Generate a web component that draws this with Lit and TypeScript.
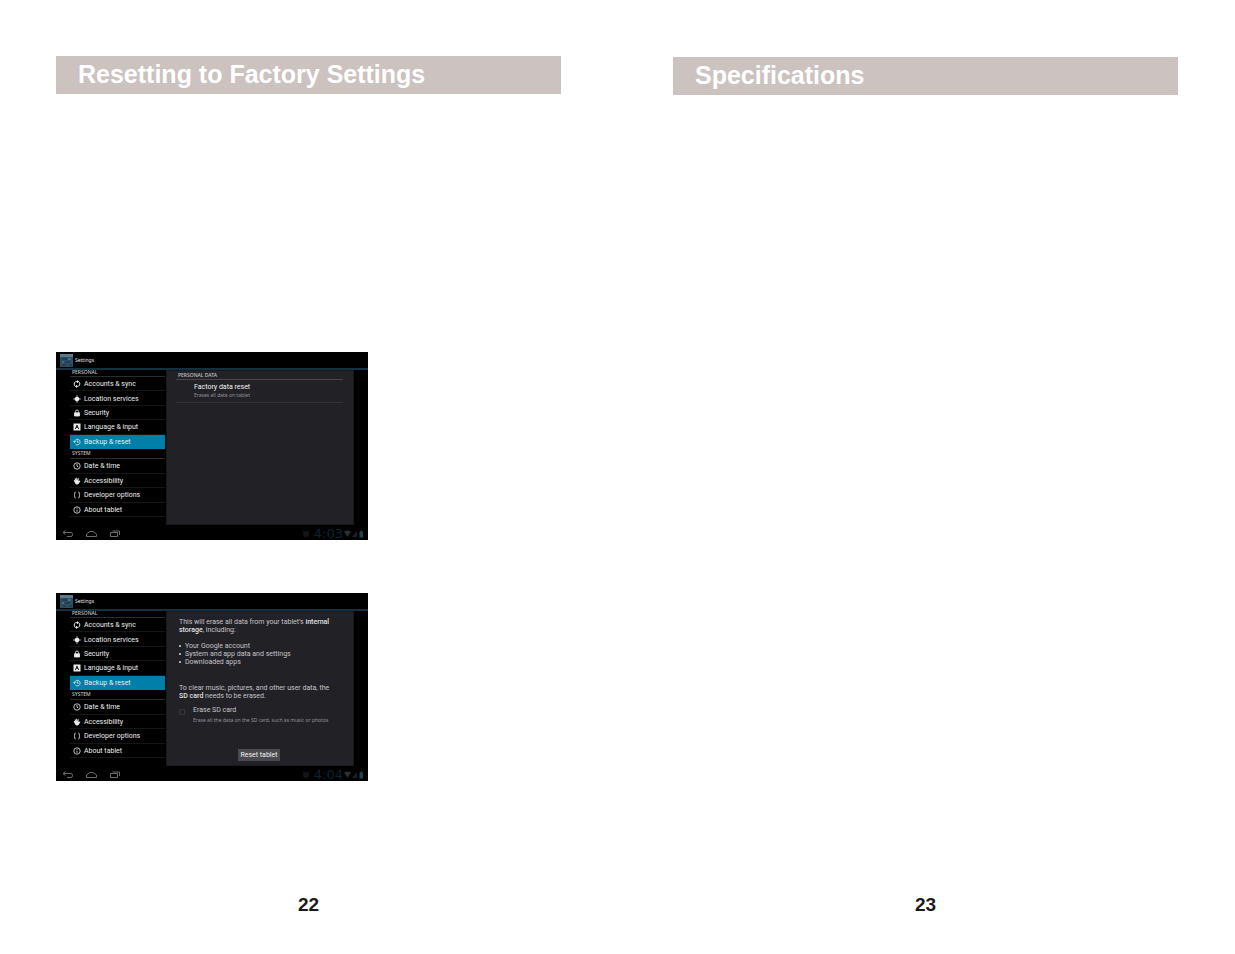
import { LitElement, html, css, svg, nothing } from "lit";
import { customElement, property } from "lit/decorators.js";

const icons: Record<string, unknown> = {
  sync: svg`<path stroke-width="2" d="M4.600 13A6 6 0 0 1 5 3.400H9.500M11.400 3A6 6 0 0 1 11 12.600H6.500" /><path fill="currentColor" stroke="none" d="M8 0L12 3.400L8 6.600ZM8 9.400L4 12.600L8 16Z" />`,
  location: svg`<circle cx="8" cy="8" r="4.600" fill="currentColor" stroke="none" /><path d="M8 .5V15.500M.5 8H15.500" />`,
  lock: svg`<path d="M3 7.500H13V14H3Z" fill="currentColor" /><path d="M5 7V5A3 3 0 0 1 11 5V7" />`,
  language: svg`<path fill="currentColor" stroke="none" fill-rule="evenodd" d="M1 1H15V15H1ZM7 4L4 12H5.800L6.400 10.200H9.600L10.200 12H12L9 4ZM8 6L9.100 8.800H6.900Z" />`,
  backup: svg`<path d="M3 8A5.600 5.600 0 1 1 5 12.400" /><path d="M.6 6.600L3 9.200L5.600 6.600M8.600 4.800V8.400H11.400" />`,
  clock: svg`<circle cx="8" cy="8" r="6.400" /><path d="M8 4V8.400L10.600 10" />`,
  hand: svg`<path fill="currentColor" stroke="none" d="M1.400 6.200L3 5.400L4.600 8L3.400 3L5 2.400L6.600 6.600L6.400 1.400H8L8.800 6.400L9.800 2L11.400 2.400L11 8L13.400 6.800L14.800 7.800L11.400 13.400Q9.600 15.400 7 14.800Q4.600 14.200 3.600 11.400Z" />`,
  braces: svg`<path d="M5.400 2Q3.400 2 3.400 4V6.400L2 8L3.400 9.600V12Q3.400 14 5.400 14M10.600 2Q12.600 2 12.600 4V6.400L14 8L12.600 9.600V12Q12.600 14 10.600 14" />`,
  info: svg`<circle cx="8" cy="8" r="6.400" /><path d="M8 7.200V11.600M8 4.400V6" />`,
};

const icon = (name: string) => html`<svg
  class="icon"
  viewBox="0 0 16 16"
  fill="none"
  stroke="currentColor"
  stroke-width="1.6"
  aria-hidden="true"
>
  ${icons[name]}
</svg>`;

const personal = [
  ["sync", "Accounts & sync"],
  ["location", "Location services"],
  ["lock", "Security"],
  ["language", "Language & input"],
  ["backup", "Backup & reset"],
];

const system = [
  ["clock", "Date & time"],
  ["hand", "Accessibility"],
  ["braces", "Developer options"],
  ["info", "About tablet"],
];

@customElement("tablet-screen")
export class TabletScreen extends LitElement {
  @property() view: "list" | "confirm" = "list";
  @property() time = "";

  static styles = css`
    :host {
      display: flex;
      flex-direction: column;
      width: 312px;
      height: 188px;
      background: #000;
      color: #e4e4e4;
      font-family: Roboto, "Liberation Sans", sans-serif;
      font-size: 7px;
      line-height: 8px;
      overflow: hidden;
    }
    * {
      box-sizing: border-box;
    }
    h3,
    h4,
    p,
    ul {
      margin: 0;
      padding: 0;
      font-weight: 400;
    }
    h3,
    h4,
    small {
      font-family: "Noto Sans", Roboto, sans-serif;
      font-size: 5px;
    }
    header {
      display: flex;
      align-items: center;
      gap: 2px;
      height: 18px;
      padding-left: 4px;
      border-bottom: 2px solid #15303f;
    }
    header svg {
      width: 13px;
      height: 13px;
    }
    .body {
      flex: 1;
      display: grid;
      grid-template-columns: 95px 1fr;
      column-gap: 1px;
      padding: 0 14px;
      min-height: 0;
    }
    nav {
      display: flex;
      flex-direction: column;
    }
    h4 {
      font-weight: 500;
      color: #c4c4c4;
    }
    nav h4 {
      height: 7px;
      line-height: 4px;
      padding-left: 2px;
      border-bottom: 1px solid #2c2c2c;
    }
    nav .second {
      height: 10px;
      line-height: 9px;
    }
    nav ul {
      display: flex;
      flex-direction: column;
      height: 72px;
      list-style: none;
    }
    nav .second + ul {
      height: 58px;
    }
    li {
      flex: 1;
      display: flex;
    }
    nav a {
      flex: 1;
      display: flex;
      align-items: center;
      gap: 3px;
      padding: 1px 0 0 3px;
      border-bottom: 1px solid #161616;
      color: #ececec;
      text-decoration: none;
      white-space: nowrap;
    }
    nav a.current {
      background: #007fa8;
      border-color: #007fa8;
    }
    .icon {
      width: 8px;
      height: 8px;
    }
    .pane {
      display: flex;
      flex-direction: column;
      padding: 0 10px 0 9px;
      background: #222126;
      border: 1px solid #19181c;
    }
    .pane h4 {
      padding: 0 2px;
      border-bottom: 1px solid #48474c;
    }
    .entry {
      padding: 3px 0 3px 18px;
      border: 0;
      border-bottom: 1px solid #323136;
      background: none;
      color: #f0f0f0;
      font: inherit;
      line-height: 8px;
      text-align: left;
    }
    small {
      display: block;
      color: #929296;
    }
    .confirm {
      padding: 6px 20px 0 12px;
      color: #c4c4c6;
      white-space: nowrap;
    }
    b {
      font-weight: 500;
      color: #e0e0e0;
    }
    .confirm ul {
      margin: 8px 0 18px;
      padding-left: 6px;
    }
    .confirm li {
      display: block;
      position: relative;
    }
    .confirm li::before {
      content: "";
      position: absolute;
      left: -6px;
      top: 3px;
      width: 2px;
      height: 2px;
      border-radius: 1px;
      background: #d8d8d8;
    }
    .option {
      display: grid;
      grid-template-columns: 6px 1fr;
      column-gap: 8px;
      align-items: start;
      margin-top: 6px;
    }
    .option input {
      appearance: none;
      width: 6px;
      height: 6px;
      margin: 3px 0 0;
      border: 1px solid #34343a;
    }
    .option small {
      margin-top: 2px;
    }
    .reset {
      align-self: center;
      width: 42px;
      height: 12px;
      margin: 25px 0 0 6px;
      padding: 0;
      border: 0;
      background: #4a4a4e;
      color: #f0f0f0;
      font: inherit;
      line-height: 12px;
    }
    footer {
      display: flex;
      align-items: center;
      height: 15px;
      padding: 3px 4px 0 6px;
    }
    .keys {
      width: 60px;
      height: 8px;
    }
    .status {
      display: flex;
      align-items: center;
      margin-left: auto;
      color: #0c2531;
      font-family: "DejaVu Sans", sans-serif;
      font-size: 13px;
      line-height: 12px;
    }
    .alarm {
      width: 8px;
      height: 8px;
      margin-right: 4px;
    }
    .signal {
      width: 21px;
      height: 8px;
    }
  `;

  private group(items: string[][]) {
    return html`<ul>
      ${items.map(
        ([name, label]) => html`<li>
          <a
            href="#"
            class=${name === "backup" ? "current" : ""}
            aria-current=${name === "backup" ? "page" : nothing}
            >${icon(name)}<span>${label}</span></a
          >
        </li>`
      )}
    </ul>`;
  }

  private listPane() {
    return html`<section class="pane">
      <h4>PERSONAL DATA</h4>
      <button class="entry">Factory data reset<small>Erases all data on tablet</small></button>
    </section>`;
  }

  private confirmPane() {
    return html`<section class="pane confirm">
      <p>This will erase all data from your tablet's <b>internal<br />storage</b>, including:</p>
      <ul>
        <li>Your Google account</li>
        <li>System and app data and settings</li>
        <li>Downloaded apps</li>
      </ul>
      <p>To clear music, pictures, and other user data, the<br /><b>SD card</b> needs to be erased.</p>
      <div class="option">
        <input type="checkbox" id="erase" />
        <label for="erase"
          >Erase SD card<small>Erase all the data on the SD card, such as music or photos</small></label
        >
      </div>
      <button class="reset">Reset tablet</button>
    </section>`;
  }

  render() {
    return html`
      <header>
        <svg viewBox="0 0 13 13" aria-hidden="true">
          <rect width="13" height="13" fill="#2f4d62" />
          <path d="M0 0H13V3H0Z" fill="#5b7a8e" />
          <path d="M2 5H7M5 8H10M3 11H6M9 11H12" stroke="#18303f" />
          <path d="M8 5H11M2 8H4" stroke="#6b8a9c" />
        </svg>
        <h3>Settings</h3>
      </header>
      <div class="body">
        <nav aria-label="Settings">
          <h4>PERSONAL</h4>
          ${this.group(personal)}
          <h4 class="second">SYSTEM</h4>
          ${this.group(system)}
        </nav>
        ${this.view === "list" ? this.listPane() : this.confirmPane()}
      </div>
      <footer>
        <svg class="keys" viewBox="0 0 60 8" fill="none" stroke="#6c6c6c" aria-hidden="true">
          <path d="M3.500 .5L1 2.500L3.500 4.500M1 2.500H9Q10.500 2.500 10.500 4.500T9 6.500H5" />
          <path d="M24.500 6.500V4L28 1.500H31L34.500 4V6.500Z" />
          <path d="M48.500 2.500H55.500V6.500H48.500ZM50.500 1H57.500V5" />
        </svg>
        <div class="status">
          <svg class="alarm" viewBox="0 0 8 8" fill="#111517" aria-hidden="true">
            <circle cx="4" cy="4" r="3" />
            <path d="M0 1L2 0V2ZM8 1L6 0V2Z" />
          </svg>
          <span>${this.time}</span>
          <svg class="signal" viewBox="0 0 21 8" aria-hidden="true">
            <path d="M1 1.500Q4.500 -.5 8 1.500L4.500 7Z" fill="#293034" />
            <path d="M9 7L14 1V7Z" fill="#1b2225" />
            <path d="M16.500 1.500H17.500V.5H19V1.500H20V7.500H16.500Z" fill="#1f4252" />
          </svg>
        </div>
      </footer>
    `;
  }
}

@customElement("app-root")
export class AppRoot extends LitElement {
  static styles = css`
    :host {
      box-sizing: border-box;
      display: grid;
      grid-template-columns: 1fr 1fr;
      column-gap: 112px;
      min-height: 100vh;
      padding: 56px 57px 37px 56px;
      background: #fff;
      font-family: "Liberation Sans", Arial, sans-serif;
    }
    .page {
      display: flex;
      flex-direction: column;
    }
    .right {
      padding-top: 1px;
    }
    h2 {
      margin: 0;
      padding: 0 22px 2px;
      background: #ccc2c0;
      color: #fff;
      font-size: 25px;
      line-height: 36px;
    }
    .shots {
      display: flex;
      flex-direction: column;
      gap: 53px;
      margin-top: 258px;
    }
    .number {
      margin: auto 0 0;
      color: #1c1a1b;
      font-size: 19px;
      font-weight: 700;
      line-height: 24px;
      text-align: center;
    }
  `;

  render() {
    return html`
      <article class="page">
        <h2>Resetting to Factory Settings</h2>
        <div class="shots">
          <tablet-screen view="list" time="4:03"></tablet-screen>
          <tablet-screen view="confirm" time="4:04"></tablet-screen>
        </div>
        <p class="number">22</p>
      </article>
      <article class="page right">
        <h2>Specifications</h2>
        <p class="number">23</p>
      </article>
    `;
  }
}
